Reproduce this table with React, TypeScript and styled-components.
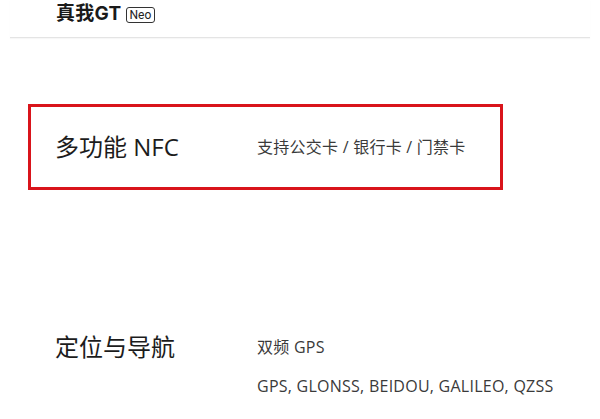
import React from "react";
import styled, { createGlobalStyle } from "styled-components";

const Global = createGlobalStyle`
  html, body { margin: 0; padding: 0; background: #ffffff; }
  body { font-family: "Open Sans", "Noto Sans CJK SC", sans-serif; color: #222; }
`;

const Page = styled.div`
  width: 600px;
  height: 419px;
  overflow: hidden;
  background: #fff;
`;

const Header = styled.header`
  margin: 0 10px;
  border-bottom: 1px solid #e4e4e4;
  box-shadow: 0 1px 1px rgba(0, 0, 0, 0.03);
  display: flex;
  align-items: flex-start;
  padding: 2px 0 0 46px;
  box-sizing: border-box;
  height: 38px;
`;

const Logo = styled.div`
  display: flex;
  align-items: center;
  gap: 4px;
`;

const LogoText = styled.span`
  font-family: "Inter", "Noto Sans CJK SC", sans-serif;
  font-weight: 700;
  font-size: 19px;
  line-height: 24px;
  color: #1a1a1a;
  letter-spacing: 0.3px;
`;

const Badge = styled.span`
  font-family: "Roboto", "Noto Sans", sans-serif;
  font-size: 12px;
  line-height: 12px;
  color: #222;
  border: 1px solid #333;
  border-radius: 3px;
  padding: 1px 3px;
  margin-top: 1px;
`;

const Specs = styled.div`
  display: flex;
  flex-direction: column;
  padding: 66px 0 0 28px;
  gap: 138px;
`;

const Row = styled.section<{ $highlight?: boolean }>`
  width: 475px;
  box-sizing: border-box;
  border: 3px solid ${(p) => (p.$highlight ? "#d9141b" : "transparent")};
  display: grid;
  grid-template-columns: 202px 1fr;
  align-items: ${(p) => (p.$highlight ? "center" : "start")};
  padding-left: 24px;
  min-height: ${(p) => (p.$highlight ? "86px" : "0")};
`;

const Label = styled.h3`
  margin: 0;
  font-family: "Open Sans", "Noto Sans CJK SC", sans-serif;
  font-weight: 400;
  font-size: 24px;
  line-height: 32px;
  color: #1c1c1c;
  white-space: nowrap;
`;

const Values = styled.div`
  display: flex;
  flex-direction: column;
  gap: 7px;
`;

const Value = styled.p`
  margin: 0;
  font-family: "Open Sans", "Noto Sans CJK SC", sans-serif;
  font-size: 16px;
  line-height: 32px;
  color: #3a3a3a;
  letter-spacing: 0.25px;
  white-space: nowrap;
`;

export default function App() {
  return (
    <Page>
      <Global />
      <Header>
        <Logo>
          <LogoText>真我GT</LogoText>
          <Badge>Neo</Badge>
        </Logo>
      </Header>
      <Specs>
        <Row $highlight>
          <Label>多功能 NFC</Label>
          <Values>
            <Value>支持公交卡 / 银行卡 / 门禁卡</Value>
          </Values>
        </Row>
        <Row>
          <Label>定位与导航</Label>
          <Values>
            <Value>双频 GPS</Value>
            <Value>GPS, GLONSS, BEIDOU, GALILEO, QZSS</Value>
          </Values>
        </Row>
      </Specs>
    </Page>
  );
}
